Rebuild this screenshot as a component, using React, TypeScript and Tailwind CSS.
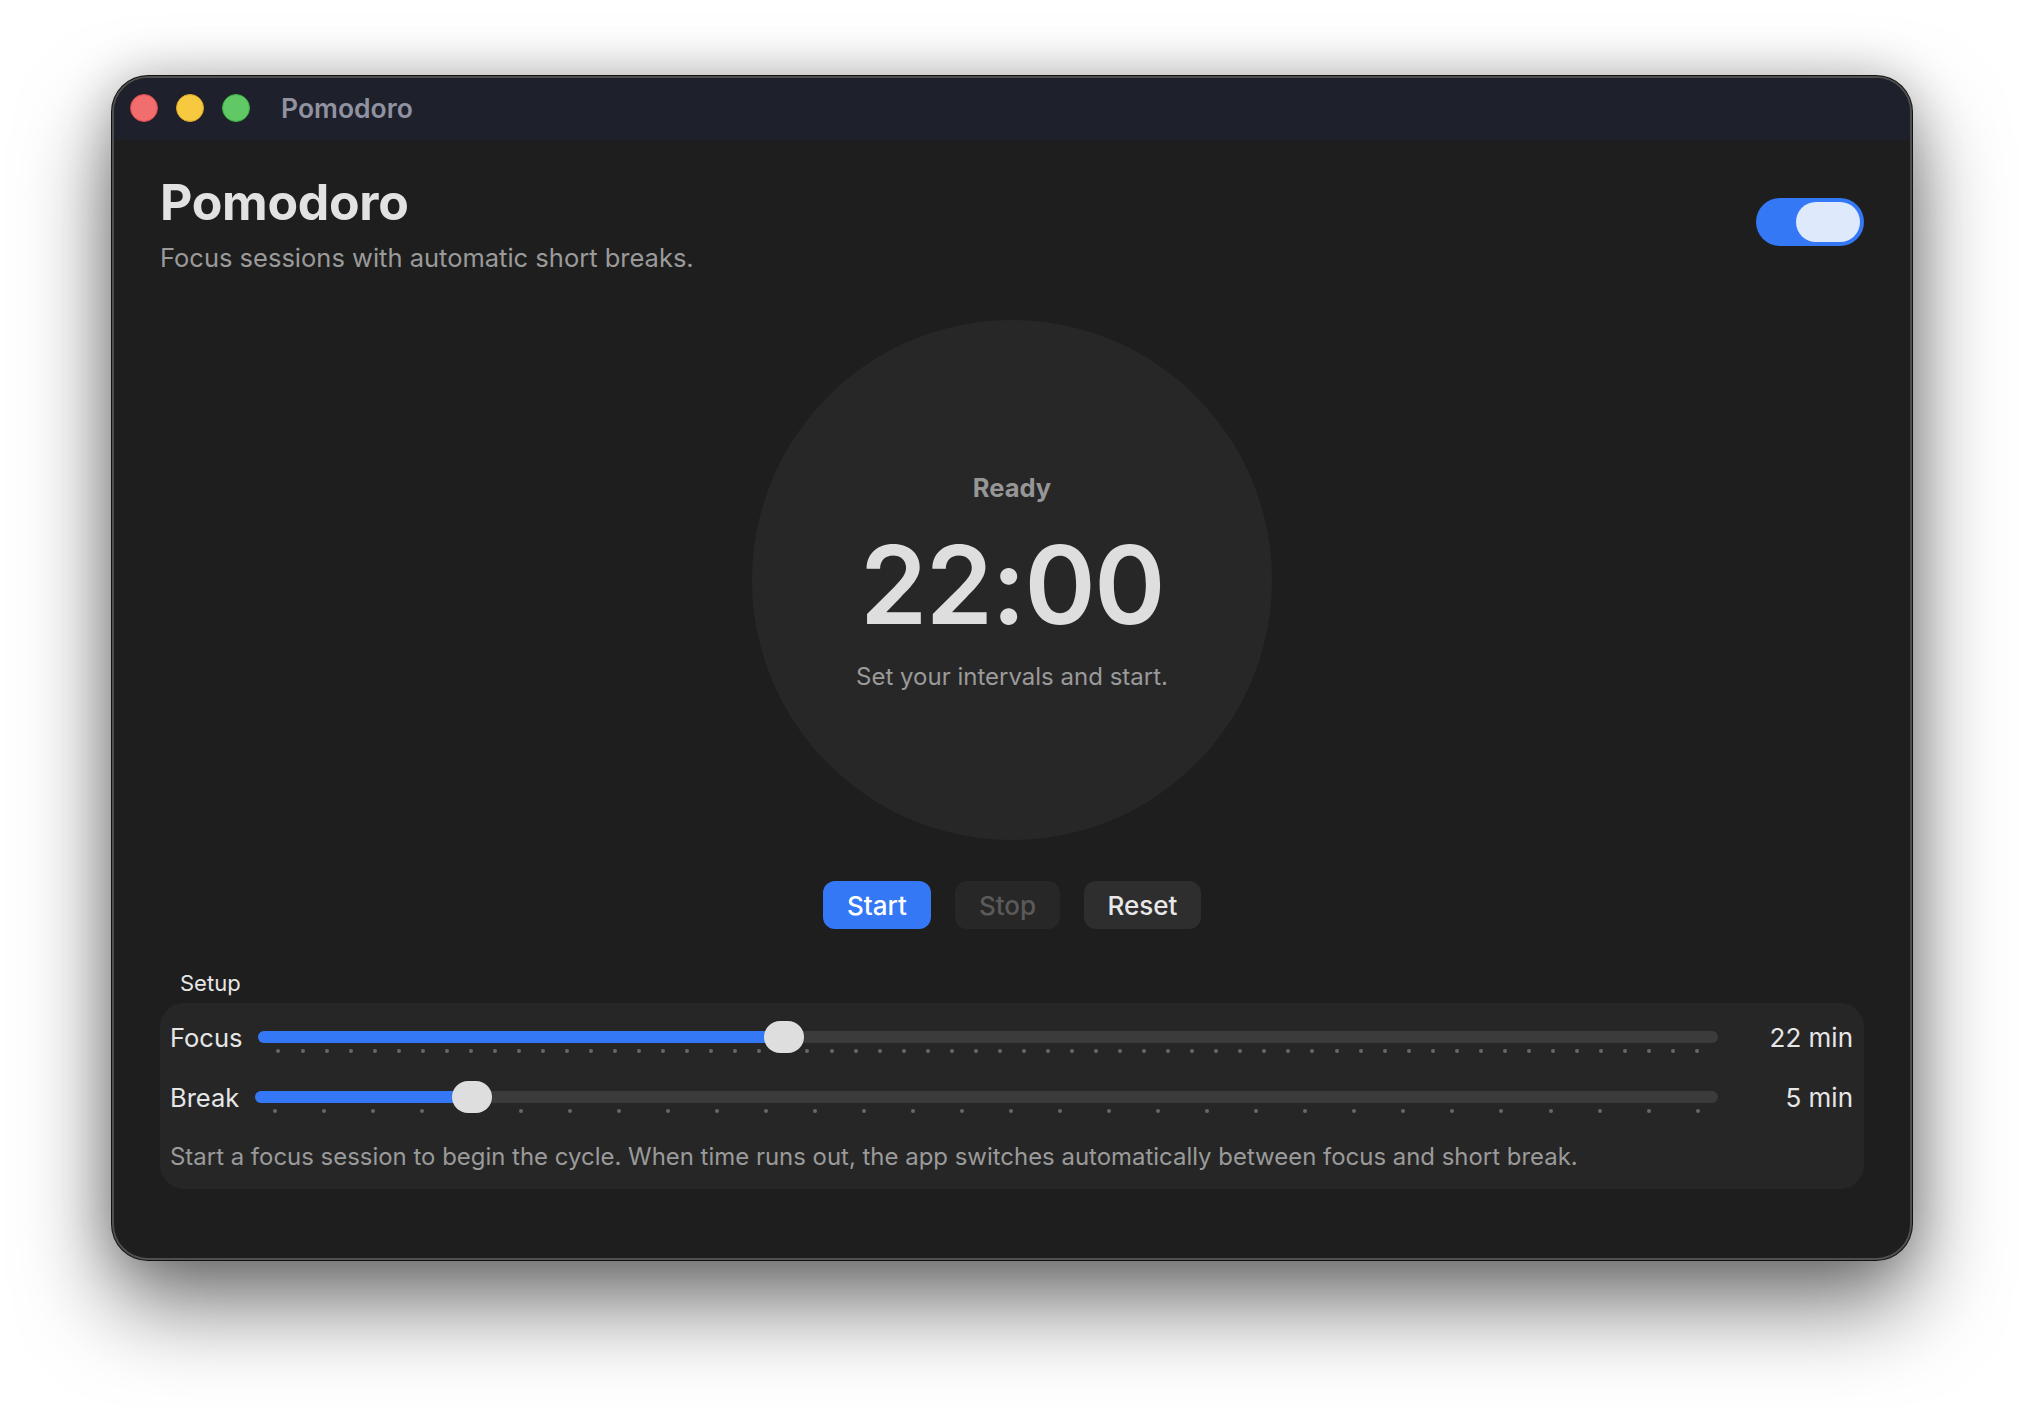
const sliders = [
  { label: "Focus", value: 22, max: 60, unit: "22 min" },
  { label: "Break", value: 5, max: 30, unit: "5 min" },
];

function TrafficLight({ className }: { className: string }) {
  return <div className={`h-[28px] w-[28px] rounded-full border ${className}`} />;
}

function Slider({ value, max }: { value: number; max: number }) {
  const ratio = (value - 1) / (max - 1);
  const knobLeft = `calc((100% - 40px) * ${ratio})`;
  const fillWidth = `calc((100% - 40px) * ${ratio} + 20px)`;

  return (
    <div className="relative flex h-[32px] flex-1 items-center">
      <div className="h-[12px] w-full overflow-hidden rounded-[6px] bg-[#3b3b3b]">
        <div className="h-full bg-[#3478f6]" style={{ width: fillWidth }} />
      </div>
      {/* Ticks sit just under the track, behind the knob */}
      <div className="absolute left-0 right-0 top-[28px] flex justify-between px-[18px]">
        {Array.from({ length: max }, (_, i) => (
          <div key={i} className="h-[4px] w-[4px] rounded-full bg-[#686868]" />
        ))}
      </div>
      <div
        className="absolute top-0 h-[32px] w-[40px] rounded-full bg-[#dedede]"
        style={{ left: knobLeft }}
      />
    </div>
  );
}

export default function App() {
  return (
    <div className="h-[1408px] w-[2024px] overflow-hidden bg-white pl-[112px] pt-[76px] font-['Inter',sans-serif]">
      <div className="h-[1184px] w-[1800px] overflow-hidden rounded-[36px] border-2 border-[#4f4f4f] bg-[#1e1e1e] shadow-[0_0_0_1px_#111111,0_44px_90px_rgba(0,0,0,0.55),0_0_50px_rgba(0,0,0,0.22)]">
        {/* Title bar */}
        <div className="flex h-[62px] items-center bg-[#1e202c] pb-[2px] pl-[16px]">
          <div className="flex gap-[18px]">
            <TrafficLight className="border-[#d9484a] bg-[#f26d6e]" />
            <TrafficLight className="border-[#dba52c] bg-[#f6c93f]" />
            <TrafficLight className="border-[#3fae45] bg-[#60c965]" />
          </div>
          <span className="ml-[31px] text-[26.5px] font-semibold leading-[32px] text-[#9092a0]">Pomodoro</span>
        </div>

        <div className="px-[46px] pt-[32px]">
          {/* Header */}
          <div className="flex items-start justify-between">
            <div>
              <h1 className="text-[50px] font-bold leading-[60px] tracking-[-0.3px] text-[#e2e2e2]">Pomodoro</h1>
              <p className="mt-[10px] text-[25.5px] leading-[32px] text-[#9a9a9a]">Focus sessions with automatic short breaks.</p>
            </div>
            <div className="mt-[26px] flex h-[48px] w-[108px] items-center justify-end rounded-full bg-[#3478f6] pr-[4px]">
              <div className="h-[40px] w-[64px] rounded-full bg-[#dfe9fc]" />
            </div>
          </div>

          {/* Timer */}
          <div className="mx-auto mt-[46px] flex h-[520px] w-[520px] flex-col items-center rounded-full bg-[#272727] pt-[152px]">
            <div className="text-[25.5px] font-bold leading-[32px] text-[#969696]">Ready</div>
            <div className="mt-[21px] text-[108px] font-semibold leading-[120px] tracking-[-1.5px] text-[#dedede]">22:00</div>
            <div className="mt-[16px] text-[24px] leading-[32px] text-[#9a9a9a]">Set your intervals and start.</div>
          </div>

          {/* Controls */}
          <div className="mt-[41px] flex justify-center gap-[24px]">
            <button className="h-[48px] w-[108px] rounded-[12px] bg-[#3478f6] text-[26px] font-medium text-white">Start</button>
            <button className="h-[48px] w-[105px] rounded-[12px] bg-[#272727] text-[26px] font-medium text-[#5a5a5a]">Stop</button>
            <button className="h-[48px] w-[117px] rounded-[12px] bg-[#2e2e2e] text-[26px] font-medium text-[#e8e8e8]">Reset</button>
          </div>

          {/* Setup */}
          <div className="mt-[40px] pl-[20px] text-[22px] leading-[28px] text-[#e6e6e6]">Setup</div>
          <div className="mt-[6px] rounded-[24px] bg-[#262626] pb-[16px] pl-[10px] pr-[11px] pt-[18px]">
            <div className="flex flex-col gap-[28px]">
              {sliders.map((s) => (
                <div key={s.label} className="flex items-center gap-[16px]">
                  <span className="h-[32px] text-[25.5px] leading-[34px] text-[#e6e6e6]">{s.label}</span>
                  <Slider value={s.value} max={s.max} />
                  <span className="h-[32px] w-[119px] text-right text-[26px] leading-[34px] text-[#e6e6e6]">{s.unit}</span>
                </div>
              ))}
            </div>
            <p className="mt-[28px] text-[23.94px] leading-[32px] text-[#9a9a9a]">
              Start a focus session to begin the cycle. When time runs out, the app switches automatically between focus and short break.
            </p>
          </div>
        </div>
      </div>
    </div>
  );
}
